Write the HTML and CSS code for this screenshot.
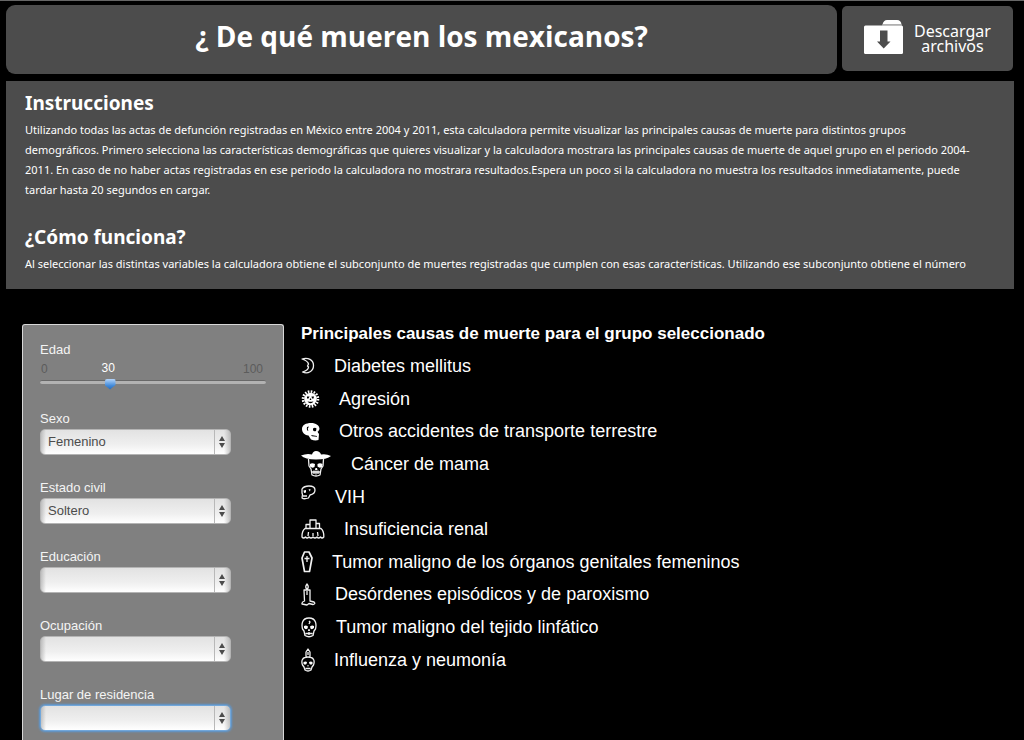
FILE: index.html
```html
<!DOCTYPE html>
<html lang="es">
<head>
<meta charset="utf-8">
<meta name="viewport" content="width=device-width, initial-scale=1">
<title>¿De qué mueren los mexicanos?</title>
<link rel="stylesheet" href="styles.css">
</head>
<body>
<div class="page">
  <header class="top">
    <h1 class="title">¿ De qué mueren los mexicanos?</h1>
    <a class="download" href="#archivos">
      <svg class="folder" viewBox="0 0 40 34" aria-hidden="true">
        <path fill="#fff" d="M18.500 4.500Q19.500 0 23 0H33Q37 0 37.500 4.500Z"/>
        <path fill="#bbb" d="M18 4.500H38V5.500H18Z"/>
        <rect y="5.500" width="39" height="28.500" rx="1.500" fill="#fff"/>
        <path fill="#4c4c4c" d="M16 10.500H23.500V21.500H26.500L19.700 28.500L13 21.500H16Z"/>
      </svg>
      <span class="download-text">Descargar<br>archivos</span>
    </a>
  </header>

  <section class="info">
    <h2>Instrucciones</h2>
    <p>Utilizando todas las actas de defunción registradas en México entre 2004 y 2011, esta calculadora permite visualizar las principales causas de muerte para distintos grupos<br>demográficos. Primero selecciona las características demográficas que quieres visualizar y la calculadora mostrara las principales causas de muerte de aquel grupo en el periodo 2004-<wbr>2011. En caso de no haber actas registradas en ese periodo la calculadora no mostrara resultados.Espera un poco si la calculadora no muestra los resultados inmediatamente, puede<br>tardar hasta 20 segundos en cargar.</p>
    <h2>¿Cómo funciona?</h2>
    <p>Al seleccionar las distintas variables la calculadora obtiene el subconjunto de muertes registradas que cumplen con esas características. Utilizando ese subconjunto obtiene el número</p>
  </section>

  <main class="main">
    <form class="filters">
      <div class="field age">
        <label for="edad">Edad</label>
        <div class="scale"><span>0</span><output class="age-value" for="edad">30</output><span>100</span></div>
        <input id="edad" type="range" min="0" max="100" value="30">
      </div>
      <div class="field">
        <label for="sexo">Sexo</label>
        <div class="picker"><select id="sexo"><option>Femenino</option><option>Masculino</option></select><svg viewBox="0 0 6 12" aria-hidden="true"><path d="M3 0L6 5H0ZM0 7H6L3 12Z"/></svg></div>
      </div>
      <div class="field">
        <label for="civil">Estado civil</label>
        <div class="picker"><select id="civil"><option>Soltero</option><option>Casado</option></select><svg viewBox="0 0 6 12" aria-hidden="true"><path d="M3 0L6 5H0ZM0 7H6L3 12Z"/></svg></div>
      </div>
      <div class="field">
        <label for="educacion">Educación</label>
        <div class="picker"><select id="educacion"><option></option></select><svg viewBox="0 0 6 12" aria-hidden="true"><path d="M3 0L6 5H0ZM0 7H6L3 12Z"/></svg></div>
      </div>
      <div class="field">
        <label for="ocupacion">Ocupación</label>
        <div class="picker"><select id="ocupacion"><option></option></select><svg viewBox="0 0 6 12" aria-hidden="true"><path d="M3 0L6 5H0ZM0 7H6L3 12Z"/></svg></div>
      </div>
      <div class="field">
        <label for="lugar">Lugar de residencia</label>
        <div class="picker picker-active"><select id="lugar"><option></option></select><svg viewBox="0 0 6 12" aria-hidden="true"><path d="M3 0L6 5H0ZM0 7H6L3 12Z"/></svg></div>
      </div>
    </form>

    <section class="results">
      <h2>Principales causas de muerte para el grupo seleccionado</h2>
      <ol class="causes">
        <li>
          <svg width="14" height="18" viewBox="0 0 14 18" aria-hidden="true"><path class="line" d="M1 2C7 0 12.500 3 12.500 8.500C12.500 14 7 17.500 1.500 15C5 14 7.500 12 7.500 10L6.500 9L7.500 7C7 4.500 4 3 1 2Z"/></svg>
          <span>Diabetes mellitus</span>
        </li>
        <li>
          <svg width="19" height="18" viewBox="0 0 19 18" aria-hidden="true"><circle cx="9.500" cy="9" r="7.500" fill="none" stroke="#fff" stroke-width="2.600" stroke-dasharray="1.600 1.345"/><circle cx="9.500" cy="9" r="6.300" class="solid"/><path class="dark" d="M6 6.500H8.500L7.500 8.500H6ZM10.500 6.500H13L12.500 8.500H11ZM9 8.500H10L10.300 10H8.700ZM6.500 11.300Q9.500 12.300 12.500 11.300Q11.500 13.300 9.500 13.300Q7.500 13.300 6.500 11.300Z"/></svg>
          <span>Agresión</span>
        </li>
        <li>
          <svg width="19" height="19" viewBox="0 0 19 19" aria-hidden="true"><path class="solid" d="M1 7C1 3 5 1 10 1C15 1 18.500 3.500 18.500 7L17 10L18 12L17.500 18Q14 19 10 17.500L7.500 13.500C3 13 1 10 1 7Z"/><path class="dark" d="M12 6.500Q14 5 15.500 6.500L15 9Q12.500 10 12 8ZM16.500 9.500L18.500 9.500L17.500 11.500ZM10 13L16 14V14.800L11 14.300ZM6 5L8 4.500L6.800 6.500L7.300 9L6.300 8.500L5.800 7Z"/></svg>
          <span>Otros accidentes de transporte terrestre</span>
        </li>
        <li>
          <svg width="31" height="26" viewBox="0 0 31 26" aria-hidden="true"><path class="solid" d="M0 4.500Q6 2 11 3.500Q12 0 15 0Q19 0 20 3.500Q25 2.500 30 5Q26 8.500 15 8.500Q4 8.500 0 4.500Z"/><path class="line" d="M7.500 8L8 15L10 18L11 24Q15 26 19 24L20 18L22 15L22.500 8"/><path class="solid" d="M9 13Q11 11.500 14 13L13.500 16Q11 17.500 9 15.500ZM16.500 13Q19 11.500 21.500 13L21 16Q18.500 17.500 16.500 15.500ZM14.500 17H16L16.500 19H14Z"/><path class="line" d="M11 21H19M13 19.500V23M15 19.500V23.500M17 19.500V23"/></svg>
          <span>Cáncer de mama</span>
        </li>
        <li class="raised">
          <svg width="15" height="15" viewBox="0 0 15 15" aria-hidden="true"><path class="line" d="M1 4Q3 1 8 1Q14 1 14 5Q14 9 9 10L7.500 13Q3 14.500 1 13L1.500 9.500L1 8ZM2 11H6"/><path class="solid" d="M2.500 5.500L5 5V7.500L3 8ZM7.500 4.500L9.500 4L9 6.500Z"/></svg>
          <span>VIH</span>
        </li>
        <li>
          <svg width="24" height="20" viewBox="0 0 24 20" aria-hidden="true"><path class="line" d="M4 9.500H20Q23 12 22.800 18Q21 20 19.500 18Q17.500 20 16 18Q14 20 12 18Q10 20 8 18Q6 20 4.500 18Q2.500 20 1 18Q.8 12 4 9.500ZM9 9V1H15V9M5 9V5.500H9M15 4.500H18.500V9M7.500 13L7 17M12 14V17M16.500 13L17 17"/></svg>
          <span>Insuficiencia renal</span>
        </li>
        <li>
          <svg width="12" height="22" viewBox="0 0 12 22" aria-hidden="true"><path class="line coffin" d="M3.500 1H8L11 7L8.500 20.500H3.500L1 7Z"/><path class="line" d="M6 5V11M3.500 7.500H8.500"/></svg>
          <span>Tumor maligno de los órganos genitales femeninos</span>
        </li>
        <li>
          <svg width="15" height="23" viewBox="0 0 15 23" aria-hidden="true"><path class="line" d="M6 6.500Q3.500 4 6 1Q8.500 4 6 6.500M3 7H9V18L13 19Q15 21 12 21.500L8 20.500L6 22L1 21Q.5 19 3.500 18L3 7ZM6 8V12"/></svg>
          <span>Desórdenes episódicos y de paroxismo</span>
        </li>
        <li>
          <svg width="16" height="21" viewBox="0 0 16 21" aria-hidden="true"><path class="line" d="M1.500 12C.5 8 .5 1 8 1C15.500 1 15.500 8 14.500 12L13 14L12 18.500Q8 21 4 18.500L3 14ZM8 4L9 5L8 7M4.500 16.500H11.500M8 15V18"/><path class="solid" d="M3 9Q5 8 7 9.500L6.500 11.500Q4.500 13 3 11ZM9 9.500Q11 8 13 9L13 11Q11 13 9.500 11.500ZM7.500 12H8.500L9 14H7Z"/></svg>
          <span>Tumor maligno del tejido linfático</span>
        </li>
        <li>
          <svg width="14" height="24" viewBox="0 0 14 24" aria-hidden="true"><path class="line" d="M5 9V4L7 1L9 4V9M7 4V7M1.500 17C0 13 1 9 7 9C13 9 14 13 12.500 17L11 19L10 22Q7 24 4 22L3 19ZM4.500 20.500H9.500"/><path class="solid" d="M2.500 14Q4.500 13 6 14L5.500 16Q4 17 2.500 16ZM8 14Q10 13 11.500 14L11.500 16Q10 17 8.500 16ZM6.500 17H7.500V18.500H6.500Z"/></svg>
          <span>Influenza y neumonía</span>
        </li>
      </ol>
    </section>
  </main>
</div>
</body>
</html>
```

FILE: styles.css
```css
* { box-sizing: border-box; }

body {
  margin: 0;
  background: #000;
  color: #fff;
  font-family: "Liberation Sans", Arial, sans-serif;
}

.page {
  display: flex;
  flex-direction: column;
  min-height: 100vh;
  padding: 4px 10px 0 6px;
  border-top: 1px solid #666;
}

.top {
  display: flex;
  align-items: flex-start;
  gap: 5px;
  margin: 0 1px 7px 0;
  font-family: "Noto Sans", sans-serif;
}

.title {
  flex: 1;
  margin: 0;
  padding: 9px 0 16px;
  border-radius: 9px;
  background: #4c4c4c;
  font-family: "Open Sans", "Noto Sans", sans-serif;
  font-size: 28px;
  line-height: 44px;
  text-align: center;
}

.download {
  display: flex;
  flex: 0 0 171px;
  gap: 10px;
  margin-top: 1px;
  padding: 14px 0 17px 22px;
  border-radius: 5px;
  background: #4c4c4c;
  color: #fff;
  font-size: 16px;
  line-height: 15px;
  text-align: center;
  text-decoration: none;
}

.folder {
  width: 40px;
  height: 34px;
}

.download-text { padding-top: 4px; }

.info {
  padding: 6px 18px 15px 19px;
  background: #4c4c4c;
  font-family: "Noto Sans", sans-serif;
}

.info h2 {
  margin: 0 0 1px;
  font-size: 19px;
  line-height: 32px;
}

.info p {
  margin: 0;
  font-size: 11px;
  line-height: 20px;
}

.info p + h2 { margin-top: 21px; }

.main {
  display: flex;
  flex: 1;
  gap: 17px;
  padding: 35px 0 0 16px;
}

.filters {
  display: flex;
  flex-direction: column;
  flex: 0 0 261px;
  gap: 24px;
  padding: 16px 17px 8px;
  border: 1px solid #d8d8d8;
  border-bottom: 0;
  border-radius: 3px 3px 0 0;
  background: #808080;
}

.field label {
  display: block;
  color: #f4f4f4;
  font-size: 13px;
  line-height: 18px;
}

.scale {
  display: grid;
  grid-template-columns: 30% 1fr auto;
  width: 226px;
  padding: 2px 3px 0 1px;
  color: #5c5c5c;
  font-size: 12px;
  line-height: 16px;
}

.age-value {
  justify-self: start;
  margin-left: -6px;
  line-height: 14px;
  color: #fff;
}

input[type="range"] {
  display: block;
  width: 226px;
  height: 9px;
  margin: 0;
  appearance: none;
  background: none;
}

input[type="range"]::-webkit-slider-runnable-track {
  height: 4px;
  border-top: 1px solid #686868;
  border-radius: 2px;
  background: #b2b2b2;
}

input[type="range"]::-webkit-slider-thumb {
  width: 11px;
  height: 11px;
  margin-top: -2px;
  appearance: none;
  border-radius: 2px;
  background: linear-gradient(#b5d5fa, #438bda 60%, #2867b4);
  clip-path: polygon(0 0, 100% 0, 100% 60%, 50% 100%, 0 60%);
}

.picker {
  display: flex;
  position: relative;
  width: 191px;
  margin-top: 1px;
}

.picker select {
  width: 100%;
  height: 26px;
  margin: 0;
  padding: 0 24px 2px 7px;
  appearance: none;
  border: 1px solid #b4b4b4;
  border-radius: 5px;
  outline: 0;
  background:
    linear-gradient(#b8b8b8, #b8b8b8) right 15px top / 1px 100% no-repeat,
    linear-gradient(90deg, rgba(150, 150, 150, .5), transparent 5px, transparent 183px, rgba(150, 150, 150, .5)),
    linear-gradient(#e2e2e2, #efefef 60%, #fff);
  color: #4c4c4c;
  font: 13px "Liberation Sans", Arial, sans-serif;
}

.picker svg {
  position: absolute;
  top: 7px;
  right: 6px;
  width: 6px;
  height: 12px;
  fill: #4c4c4c;
  pointer-events: none;
}

.picker-active select,
.picker select:focus {
  border-color: #72a7da;
  box-shadow: 0 0 2px 1px #5b98d4;
}

.results { flex: 1; }

.results h2 {
  margin: 0;
  font-size: 17px;
  line-height: 20px;
}

.causes {
  display: grid;
  grid-auto-rows: 1fr;
  min-height: 326px;
  margin: 6px 0 0;
  padding: 0;
  font-size: 18px;
  line-height: 24px;
  list-style: none;
}

.causes li {
  display: flex;
  align-items: center;
  gap: 19px;
}

.causes svg { flex: none; }

.raised svg { margin-bottom: 8px; }

.line {
  fill: none;
  stroke: #f0f0f0;
  stroke-width: 1.3;
  stroke-linejoin: round;
}

.coffin { stroke-width: 1.7; }

.solid { fill: #fff; }

.dark { fill: #000; }
```
